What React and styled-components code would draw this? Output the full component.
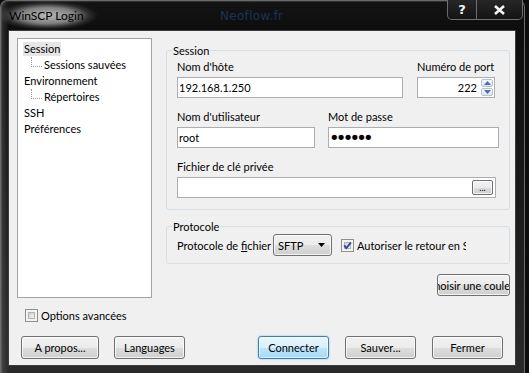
import React from "react";
import styled, { createGlobalStyle, css } from "styled-components";

const GlobalStyle = createGlobalStyle`
  * { box-sizing: border-box; }
  html, body {
    margin: 0;
    padding: 0;
    background: #0c0c0c;
  }
  body {
    width: 529px;
    height: 373px;
    overflow: hidden;
    font-family: Lato, "Liberation Sans", sans-serif;
    font-size: 11px;
    color: #000;
  }
`;

const treeItems = [
  { label: "Session", level: 0, selected: true },
  { label: "Sessions sauvées", level: 1 },
  { label: "Environnement", level: 0 },
  { label: "Répertoires", level: 1 },
  { label: "SSH", level: 0 },
  { label: "Préférences", level: 0 },
];

const CheckMark = () => (
  <svg width="13" height="13" viewBox="0 0 13 13">
    <path d="M3.2 6.4 L5.4 9 L10 3.4" fill="none" stroke="#2d4c94" strokeWidth="1.9" />
  </svg>
);

const Check = ({ checked }) => (
  <CheckBox>
    <CheckFill />
    {checked && <CheckMark />}
  </CheckBox>
);

export default function App() {
  return (
    <>
      <GlobalStyle />
      <Window>
        <TitleBar>
          <Title>WinSCP Login</Title>
          <Logo>Neoflow.fr</Logo>
          <span />
          <CaptionButtons>
            <CaptionButton $w={28}>?</CaptionButton>
            <CaptionButton $w={46}>
              <svg width="13" height="10" viewBox="0 0 13 10">
                <path d="M2 1 L11 9 M11 1 L2 9" stroke="#f4f4f4" strokeWidth="2.6" />
              </svg>
            </CaptionButton>
          </CaptionButtons>
        </TitleBar>

        <Client>
          <Main>
            <LeftCol>
              <Tree>
                {treeItems.map((item) => (
                  <TreeRow key={item.label} $child={item.level === 1}>
                    {item.level === 1 && <Connector />}
                    <TreeLabel $child={item.level === 1} $selected={item.selected}>
                      {item.label}
                    </TreeLabel>
                  </TreeRow>
                ))}
              </Tree>
              <OptionsRow>
                <Check />
                <span>Options avancées</span>
              </OptionsRow>
            </LeftCol>

            <RightCol>
              <Group>
                <Legend>Session</Legend>
                <SessionBody>
                  <FieldRow>
                    <Field $w={226}>
                      <Label>Nom d'hôte</Label>
                      <InputBox>
                        <Input readOnly value="192.168.1.250" />
                      </InputBox>
                    </Field>
                    <Field $w={78} $ml={14}>
                      <Label>Numéro de port</Label>
                      <InputBox>
                        <Input readOnly value="222" $right />
                        <Spin>
                          <SpinBtn>
                            <svg width="7" height="4" viewBox="0 0 7 4">
                              <path d="M0 4 L3.5 0 L7 4 Z" fill="#4f6fa8" />
                            </svg>
                          </SpinBtn>
                          <SpinBtn>
                            <svg width="7" height="4" viewBox="0 0 7 4">
                              <path d="M0 0 L3.5 4 L7 0 Z" fill="#4f6fa8" />
                            </svg>
                          </SpinBtn>
                        </Spin>
                      </InputBox>
                    </Field>
                  </FieldRow>
                  <FieldRow>
                    <Field $w={138}>
                      <Label>Nom d'utilisateur</Label>
                      <InputBox>
                        <Input readOnly value="root" />
                      </InputBox>
                    </Field>
                    <Field $w={171} $ml={13}>
                      <Label>Mot de passe</Label>
                      <InputBox>
                        <Input readOnly type="password" value="secret" $password />
                      </InputBox>
                    </Field>
                  </FieldRow>
                  <FieldRow>
                    <Field $w={319}>
                      <Label>Fichier de clé privée</Label>
                      <InputBox>
                        <Input readOnly value="" />
                        <BrowseButton>...</BrowseButton>
                      </InputBox>
                    </Field>
                  </FieldRow>
                </SessionBody>
              </Group>

              <Group $gap={9}>
                <Legend>Protocole</Legend>
                <ProtocolBody>
                  <ProtoLabel>
                    Protocole de <u>f</u>ichier
                  </ProtoLabel>
                  <Combo>
                    <span>SFTP</span>
                    <svg width="7" height="4" viewBox="0 0 7 4">
                      <path d="M0 0 L7 0 L3.5 4 Z" fill="#000" />
                    </svg>
                  </Combo>
                  <FallbackCheck>
                    <Check checked />
                    <Clipped>Autoriser le retour en SCP</Clipped>
                  </FallbackCheck>
                </ProtocolBody>
              </Group>

              <ColorButton>
                <span>Choisir une couleur</span>
              </ColorButton>
            </RightCol>
          </Main>

          <ButtonRow>
            <Button $w={78}>A propos...</Button>
            <Button $w={71} $ml={15}>Languages</Button>
            <Spacer />
            <Button $w={71} $default>Connecter</Button>
            <Button $w={71} $ml={16}>Sauver...</Button>
            <Button $w={71} $ml={16}>Fermer</Button>
          </ButtonRow>
        </Client>
      </Window>
    </>
  );
}

const Window = styled("div")`
  width: 525px;
  height: 373px;
  display: flex;
  flex-direction: column;
  padding: 0 8px 0 7px;
  border: 1px solid #6b6b6b;
  border-bottom: none;
  border-radius: 7px 7px 0 0;
  background:
    linear-gradient(to right, rgba(120, 120, 120, 0.35) 0, rgba(0, 0, 0, 0) 8px),
    linear-gradient(to bottom, #141414 0, #0d0d0d 30px, #1c1c1c 60%, #2a2a2a 100%);
  box-shadow: inset 1px 1px 0 rgba(255, 255, 255, 0.12);
`;

const TitleBar = styled("div")`
  height: 29px;
  margin: 0 -8px 0 -7px;
  display: grid;
  grid-template-columns: 219px auto 1fr auto;
  align-items: center;
`;

const Title = styled("div")`
  justify-self: start;
  height: 29px;
  display: flex;
  align-items: center;
  padding: 0 14px 0 8px;
  font-size: 12px;
  color: #000;
  background: radial-gradient(
    ellipse farthest-side at 48% 50%,
    rgba(215, 215, 215, 0.85) 0%,
    rgba(175, 175, 175, 0.7) 55%,
    rgba(110, 110, 110, 0.3) 82%,
    rgba(40, 40, 40, 0) 100%
  );
`;

const Logo = styled("div")`
  font-family: "DejaVu Sans", sans-serif;
  font-size: 12px;
  color: #1b3454;
  letter-spacing: 0.3px;
`;

const CaptionButtons = styled("div")`
  align-self: start;
  display: flex;
  height: 20px;
  margin-top: -1px;
  margin-right: 1px;
  border: 1px solid rgba(190, 190, 190, 0.5);
  border-top: none;
  border-radius: 0 0 5px 5px;
  overflow: hidden;
  background: linear-gradient(to bottom, #262626, #141414);
`;

const CaptionButton = styled("div")`
  width: ${(p) => p.$w}px;
  display: flex;
  align-items: center;
  justify-content: center;
  color: #f4f4f4;
  font-family: "DejaVu Sans", sans-serif;
  font-weight: bold;
  font-size: 13px;

  & + & {
    border-left: 1px solid rgba(190, 190, 190, 0.5);
  }
`;

const Client = styled("div")`
  flex: 1;
  margin-bottom: 7px;
  display: flex;
  flex-direction: column;
  padding: 7px 5px 6px 8px;
  background: #f0f0f0;
  border: 1px solid #3c3c3c;
`;

const Main = styled("div")`
  display: flex;
  align-items: flex-start;
`;

const LeftCol = styled("div")`
  width: 135px;
  display: flex;
  flex-direction: column;
`;

const Tree = styled("div")`
  height: 260px;
  padding-top: 2px;
  background: #fff;
  border: 1px solid #a3a3a3;
`;

const TreeRow = styled("div")`
  height: 16px;
  display: flex;
  align-items: flex-start;
  padding-left: ${(p) => (p.$child ? 13 : 5)}px;
`;

const Connector = styled("span")`
  width: 11px;
  height: 10px;
  border-left: 1px dotted #9a9a9a;
  border-bottom: 1px dotted #9a9a9a;
`;

const TreeLabel = styled("span")`
  padding: 0 1px;
  line-height: ${(p) => (p.$child ? 16 : 14)}px;
  margin-top: ${(p) => (p.$child ? 0 : 1)}px;
  margin-left: ${(p) => (p.$child ? 1 : 0)}px;
  white-space: nowrap;
  ${(p) =>
    p.$selected &&
    css`
      background: #e6e6e6;
    `}
`;

const OptionsRow = styled("div")`
  margin-top: 11px;
  padding-left: 8px;
  height: 13px;
  display: flex;
  align-items: center;
  gap: 3px;
`;

const CheckBox = styled("span")`
  flex: none;
  width: 13px;
  height: 13px;
  display: grid;
  padding: 2px;
  border: 1px solid #8e8f8f;
  background: #f4f4f4;

  & > * {
    grid-area: 1 / 1;
  }
  & > svg {
    margin: -3px;
  }
`;

const CheckFill = styled("span")`
  border: 1px solid #b2b2b2;
  background: linear-gradient(135deg, #cfcfcf, #f3f3f3);
`;

const RightCol = styled("div")`
  width: 344px;
  margin-left: 14px;
  margin-top: 5px;
  display: flex;
  flex-direction: column;
`;

const Group = styled("fieldset")`
  margin: ${(p) => p.$gap || 0}px 0 0 0;
  padding: 0;
  min-width: 0;
  border: 1px solid #d5dfe5;
  border-radius: 3px;
`;

const Legend = styled("legend")`
  margin-left: 5px;
  padding: 0 1px;
  line-height: 15px;
`;

const SessionBody = styled("div")`
  padding: 2px 10px 11px 10px;
`;

const FieldRow = styled("div")`
  display: flex;

  & + & {
    margin-top: 12px;
  }
`;

const Field = styled("div")`
  width: ${(p) => p.$w}px;
  margin-left: ${(p) => p.$ml || 0}px;
  display: flex;
  flex-direction: column;
`;

const Label = styled("div")`
  height: 14px;
  line-height: 14px;
  margin-bottom: 3px;
  white-space: nowrap;
`;

const InputBox = styled("div")`
  height: 21px;
  display: flex;
  align-items: center;
  background: #fff;
  border: 1px solid #abadb3;
`;

const Input = styled("input")`
  flex: 1;
  min-width: 0;
  height: 100%;
  border: none;
  outline: none;
  background: transparent;
  font-family: inherit;
  font-size: 11px;
  color: #000;
  padding: 0 ${(p) => (p.$right ? 4 : 0)}px 0 1px;
  text-align: ${(p) => (p.$right ? "right" : "left")};
  ${(p) =>
    p.$password &&
    css`
      font-family: "DejaVu Sans", sans-serif;
      font-size: 18px;
      letter-spacing: -3.8px;
      padding-left: 0;
    `}
`;

const Spin = styled("div")`
  width: 12px;
  height: 17px;
  margin-right: 1px;
  display: flex;
  flex-direction: column;
  gap: 1px;
`;

const SpinBtn = styled("div")`
  flex: 1;
  display: flex;
  align-items: center;
  justify-content: center;
  border: 1px solid #b7c0cc;
  border-radius: 2px;
  background: linear-gradient(to bottom, #f6f8fb, #dfe5ee);
`;

const buttonFace = css`
  border: 1px solid #707070;
  border-radius: 3px;
  background: linear-gradient(to bottom, #f2f2f2 0%, #ebebeb 50%, #dddddd 51%, #cfcfcf 100%);
  box-shadow: inset 0 0 0 1px rgba(255, 255, 255, 0.75);
`;

const BrowseButton = styled("div")`
  ${buttonFace};
  width: 21px;
  height: 15px;
  margin-right: 2px;
  border-radius: 2px;
  display: flex;
  align-items: flex-end;
  justify-content: center;
  font-size: 9px;
  line-height: 10px;
  padding-bottom: 1px;
`;

const ProtocolBody = styled("div")`
  padding: 0 10px 7px 10px;
  display: flex;
  align-items: center;
`;

const ProtoLabel = styled("span")`
  width: 96px;
  white-space: nowrap;
`;

const Combo = styled("div")`
  ${buttonFace};
  width: 59px;
  height: 22px;
  display: flex;
  align-items: center;
  justify-content: space-between;
  padding: 0 6px 0 4px;
`;

const FallbackCheck = styled("div")`
  margin-left: 9px;
  display: flex;
  align-items: center;
  gap: 3px;
`;

const Clipped = styled("span")`
  width: 109px;
  overflow: hidden;
  white-space: nowrap;
`;

const ColorButton = styled("div")`
  ${buttonFace};
  align-self: flex-end;
  margin-top: 10px;
  width: 73px;
  height: 22px;
  display: flex;
  align-items: center;
  justify-content: center;
  overflow: hidden;
  white-space: nowrap;

  & > span {
    flex: none;
  }
`;

const ButtonRow = styled("div")`
  margin-top: auto;
  margin-left: 4px;
  margin-right: 7px;
  display: flex;
  height: 23px;
`;

const Spacer = styled("div")`
  flex: 1;
`;

const Button = styled("div")`
  ${buttonFace};
  width: ${(p) => p.$w}px;
  margin-left: ${(p) => p.$ml || 0}px;
  display: flex;
  align-items: center;
  justify-content: center;
  white-space: nowrap;

  ${(p) =>
    p.$default &&
    css`
      border-color: #3c7fb1;
      background: linear-gradient(to bottom, #eaf6fd 0%, #d9f0fc 50%, #bee6fd 51%, #a7d9f5 100%);
      box-shadow: inset 0 0 0 1px rgba(255, 255, 255, 0.6), 0 0 2px #6cbcf0;
    `}
`;
